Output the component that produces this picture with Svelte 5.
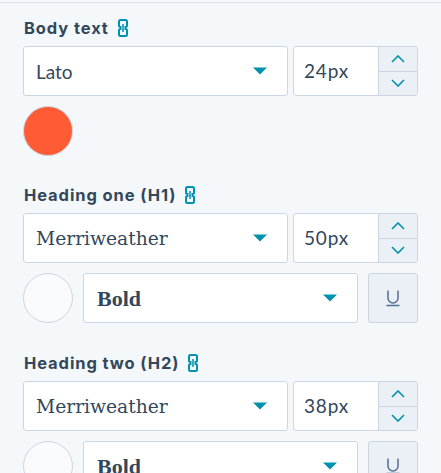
<script>
  const sections = [
    { label: 'Body text', font: 'Lato', size: '24px', color: '#ff5c35', sans: true },
    { label: 'Heading one (H1)', font: 'Merriweather', size: '50px', color: '#f8fafc', weight: 'Bold' },
    { label: 'Heading two (H2)', font: 'Merriweather', size: '38px', color: '#f8fafc', weight: 'Bold' }
  ];
</script>

{#snippet caret()}
  <svg class="caret" width="14" height="8" viewBox="0 0 14 8"><path d="M0 0.5h14L7 7.5z" fill="#0091ae" /></svg>
{/snippet}

<div class="panel">
  {#each sections as s}
    <section class="group">
      <div class="label">
        <span>{s.label}</span>
        <svg width="10" height="18" viewBox="0 0 10 18" fill="none" stroke="#0091ae" stroke-width="2">
          <path d="M3.500 8H2.500A1.500 1.500 0 0 1 1 6.500V2.500A1.500 1.500 0 0 1 2.500 1H7.500A1.500 1.500 0 0 1 9 2.500V6.500A1.500 1.500 0 0 1 7.500 8H6.500" />
          <path d="M3.500 10H2.500A1.500 1.500 0 0 0 1 11.500V15.500A1.500 1.500 0 0 0 2.500 17H7.500A1.500 1.500 0 0 0 9 15.500V11.500A1.500 1.500 0 0 0 7.500 10H6.500" />
          <path d="M5 5V13" stroke-width="1.500" />
        </svg>
      </div>
      <div class="row">
        <div class="select grow">
          <span class={s.sans ? 'value sans' : 'value serif'}>{s.font}</span>
          {@render caret()}
        </div>
        <div class="number">
          <span class="size">{s.size}</span>
          <div class="stepper">
            <button class="step" aria-label="Increase">
              <svg width="14" height="8" viewBox="0 0 14 8" fill="none" stroke="#0091ae" stroke-width="1.600"><path d="M1 7l6-6 6 6" /></svg>
            </button>
            <button class="step" aria-label="Decrease">
              <svg width="14" height="8" viewBox="0 0 14 8" fill="none" stroke="#0091ae" stroke-width="1.600"><path d="M1 1l6 6 6-6" /></svg>
            </button>
          </div>
        </div>
      </div>
      <div class="row second">
        <div class="swatch" style="background: {s.color}"></div>
        {#if s.weight}
          <div class="select grow">
            <span class="value bold">{s.weight}</span>
            {@render caret()}
          </div>
          <button class="underline" aria-label="Underline">
            <svg width="14" height="18" viewBox="0 0 14 18" fill="none" stroke="#506e91" stroke-width="1.500"><path d="M2 1.500V9a5 5 0 0 0 10 0V1.500" /><path d="M0.500 16.500h13" /></svg>
          </button>
        {/if}
      </div>
    </section>
  {/each}
</div>

<style>
  :global(body) {
    background: #f5f8fa;
    overflow: hidden;
  }

  .panel {
    border-top: 1px solid #dfe3eb;
    margin-top: 2px;
    padding: 0 23px;
    height: 470px;
    overflow: hidden;
    font-family: 'Inter', sans-serif;
    color: #33475b;
  }

  .group {
    padding-top: 28px;
    width: 395px;
  }

  .group:first-child {
    padding-top: 14px;
  }

  .group:last-child {
    padding-top: 29px;
  }

  .label {
    display: flex;
    align-items: center;
    gap: 9px;
    height: 22px;
    margin-bottom: 7px;
    padding-left: 1px;
    font-size: 16.500px;
    font-weight: 700;
    letter-spacing: 0.900px;
  }

  .row {
    display: flex;
    gap: 5px;
  }

  .second {
    gap: 10px;
    margin-top: 10px;
  }

  .select {
    height: 50px;
    box-sizing: border-box;
    background: #fff;
    border: 1px solid #cbd6e2;
    border-radius: 3px;
    display: flex;
    align-items: center;
    justify-content: space-between;
    padding: 0 20px 0 12px;
  }

  .grow {
    flex: 1;
  }

  .value {
    font-size: 19px;
  }

  .sans {
    font-family: 'Lato', sans-serif;
  }

  .serif {
    font-family: 'DejaVu Serif', serif;
    font-size: 18.700px;
    padding-top: 1px;
  }

  .bold {
    font-family: 'Liberation Serif', serif;
    font-size: 22px;
    font-weight: 700;
    padding: 2px 0 0 1px;
  }

  .caret {
    display: block;
  }

  .number {
    width: 125px;
    height: 50px;
    box-sizing: border-box;
    background: #fff;
    border: 1px solid #cbd6e2;
    border-radius: 3px;
    display: flex;
    overflow: hidden;
  }

  .size {
    flex: 1;
    padding-left: 10px;
    line-height: 48px;
    font-size: 19px;
    font-family: 'Lato', sans-serif;
    letter-spacing: 0.800px;
  }

  .stepper {
    width: 38px;
    border-left: 1px solid #cbd6e2;
    display: flex;
    flex-direction: column;
  }

  .step {
    flex: 1;
    padding: 0;
    border: 0;
    background: #eaf0f6;
    display: flex;
    align-items: center;
    justify-content: center;
  }

  .step + .step {
    border-top: 1px solid #cbd6e2;
  }

  .swatch {
    width: 50px;
    height: 50px;
    box-sizing: border-box;
    border: 1px solid #cbd6e2;
    border-radius: 50%;
    flex: none;
  }

  .underline {
    width: 50px;
    height: 50px;
    flex: none;
    padding: 0;
    background: #eaf0f6;
    border: 1px solid #cbd6e2;
    border-radius: 3px;
    display: flex;
    align-items: center;
    justify-content: center;
  }
</style>
